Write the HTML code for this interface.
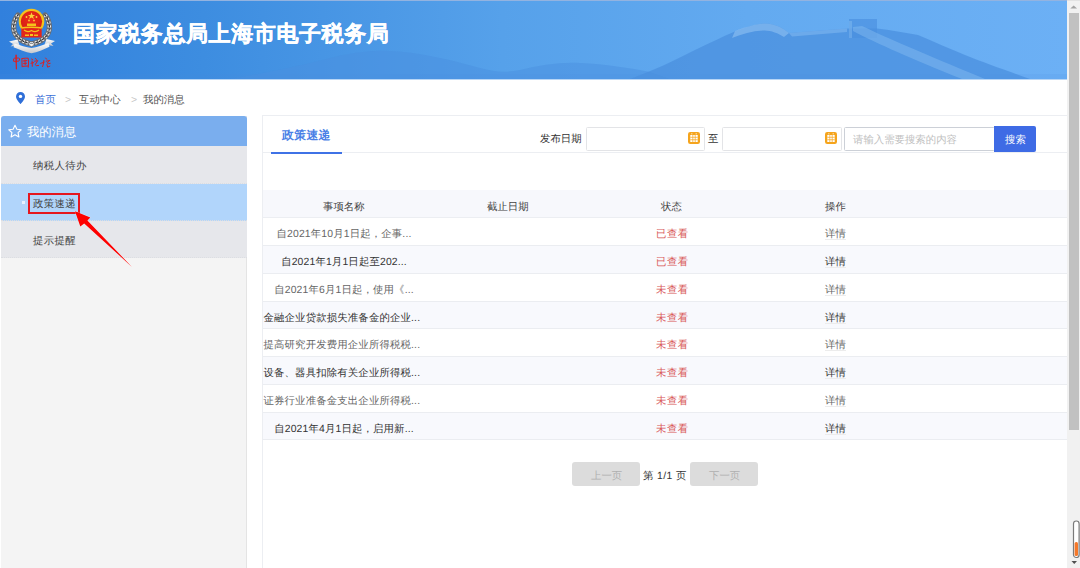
<!DOCTYPE html>
<html><head><meta charset="utf-8">
<style>
*{margin:0;padding:0;box-sizing:border-box}
html,body{width:1080px;height:568px;overflow:hidden;background:#fff;font-family:"Liberation Sans",sans-serif;color:#333;text-rendering:geometricPrecision}
.a{position:absolute}
.t{position:absolute;white-space:nowrap;line-height:1}
.s{margin-top:2.5px}
#title{left:73px;top:23px;font-size:22px;font-weight:bold;color:#fff;letter-spacing:0.6px;-webkit-text-stroke:0.35px #fff}
.crumb{font-size:10.4px;color:#555;top:93px}
#side{left:1px;top:116px;width:246px;height:452px;background:#f4f4f4;border-right:1px solid #e4e4e4}
#sh{left:1px;top:116px;width:246px;height:30px;background:#7aaeee;border-radius:3px 3px 0 0}
.mi{left:1px;width:246px;height:37px;background:#e6e7eb;border-bottom:1px dotted #dcdee2}
.mt{font-size:10.4px;color:#444;left:33px;letter-spacing:0.35px}
#panel{left:262px;top:115px;width:806px;height:453px;border-left:1px solid #eceef2;border-top:1px solid #eceef2;background:#fff}
.inp{height:24px;border:1px solid #e3e4e7;border-radius:1.5px;background:#fff}
.cal{width:12px;height:12px;background:#f5a31a;border-radius:2px}
.row{left:263px;width:805px;height:28px;border-bottom:1px solid #eceef2}
.c{font-size:10.4px;color:#666}
.red{color:#d85858;letter-spacing:0.5px}
.pbtn{height:24px;width:68px;background:#dcdcdc;border-radius:3px}
</style></head><body>
<svg id="hdr" class="a" style="left:0;top:0" width="1068" height="80" viewBox="0 0 1068 80">
<defs>
<linearGradient id="hg" x1="0" y1="0" x2="1068" y2="0" gradientUnits="userSpaceOnUse">
<stop offset="0" stop-color="#3180dd"/><stop offset="0.19" stop-color="#3d8de0"/><stop offset="0.47" stop-color="#56a1ea"/><stop offset="0.7" stop-color="#63aaf0"/><stop offset="1" stop-color="#6cb0f5"/>
</linearGradient>
</defs>
<rect width="1068" height="79" fill="url(#hg)"/>
<path d="M230 79 C260 74 300 66 330 58 C350 53 370 50 390 51 C420 52 450 60 480 68 C495 72 505 73 520 70 C540 65 560 62 580 63 C605 64 630 68 650 72 L670 79 Z" fill="#4a8fdf" opacity="0.5"/>
<rect x="0" y="74" width="1068" height="5" fill="#4a8fdf" opacity="0.12"/>
<path d="M630 79 C655 70 675 60 695 50 C712 42 728 34 740 29.5 C750 26 757 24 765 23.5 C776 24 783 28 789 33 L847 28.5 L849 28.5 L877 28.5 C890 30 905 33 918 35 C935 42 950 49 965 55 C985 63 1005 70 1030 79 Z" fill="#4a8fde" opacity="0.72"/>
<path d="M735 31 C748 26 757 24 765 23.5 C776 24 783 28 789 33 L784 37 C778 33 770 30 763 30.5 C752 31 742 34 732 38 Z" fill="#9ccaf5" opacity="0.5"/>
<path d="M789 33 L847 28.5 L847 32 L792 36.5 Z" fill="#8fc2f3" opacity="0.45"/>
<rect x="849" y="19" width="28" height="19" fill="#4a8fde" opacity="0.65"/>
<rect x="849" y="21" width="3" height="17" fill="#8fc2f3" opacity="0.4"/>
<path d="M853 27 L862 26 C885 37 920 52 985 79 L962 79 C910 58 878 44 853 31 Z" fill="#8fc2f3" opacity="0.4"/>
<rect width="1068" height="1" fill="#93b3e0"/>
<rect y="79" width="1068" height="1" fill="#b8d6f6"/>
</svg>
<svg class="a" style="left:0;top:0" width="70" height="79" viewBox="0 0 70 79">
<defs>
<radialGradient id="rg" cx="0.5" cy="0.4" r="0.6"><stop offset="0" stop-color="#f02a1a"/><stop offset="1" stop-color="#d41f14"/></radialGradient>
<linearGradient id="sg" x1="0" y1="0" x2="0" y2="1"><stop offset="0" stop-color="#ffffff"/><stop offset="1" stop-color="#c4c7cc"/></linearGradient>
</defs>
<g fill="none" stroke-linecap="round">
<path d="M18 15 C13 21 12.5 29 15.5 34.5 C18.5 39 24 42.5 31.5 44" stroke="#6a6d72" stroke-width="5.2"/>
<path d="M45 15 C50 21 50.5 29 47.5 34.5 C44.5 39 39 42.5 31.5 44" stroke="#6a6d72" stroke-width="5.2"/>
<path d="M18 15 C13 21 12.5 29 15.5 34.5 C18.5 39 24 42.5 31.5 44" stroke="#eceded" stroke-width="3.4" stroke-dasharray="2 1.8" stroke-linecap="butt"/>
<path d="M45 15 C50 21 50.5 29 47.5 34.5 C44.5 39 39 42.5 31.5 44" stroke="#eceded" stroke-width="3.4" stroke-dasharray="2 1.8" stroke-linecap="butt"/>
<path d="M18 15 C13 21 12.5 29 15.5 34.5 C18.5 39 24 42.5 31.5 44" stroke="#1e1f22" stroke-width="1.1" stroke-dasharray="1.2 2.6"/>
<path d="M45 15 C50 21 50.5 29 47.5 34.5 C44.5 39 39 42.5 31.5 44" stroke="#1e1f22" stroke-width="1.1" stroke-dasharray="1.2 2.6"/>
</g>
<circle cx="31.5" cy="21.5" r="12.8" fill="#f5c21b"/>
<circle cx="31.5" cy="21.5" r="10.6" fill="url(#rg)"/>
<path d="M31.5 12.3 l1 2.6 2.7 0 -2.2 1.6 .9 2.6 -2.4 -1.6 -2.4 1.6 .9 -2.6 -2.2 -1.6 2.7 0z" fill="#f7d23a"/>
<circle cx="26.5" cy="17" r="0.9" fill="#f7d23a"/><circle cx="36.5" cy="17" r="0.9" fill="#f7d23a"/>
<circle cx="29" cy="20.5" r="0.9" fill="#f7d23a"/><circle cx="34" cy="20.5" r="0.9" fill="#f7d23a"/>
<rect x="27" y="23.5" width="9" height="2.5" fill="#f5c21b"/>
<path d="M21.3 28 C25 26.5 38 26.5 41.7 28 L41.7 37.4 L21.3 37.4 Z" fill="#e2261a"/>
<path d="M21.5 28.2 C25 27 38 27 41.5 28.2" fill="none" stroke="#f5c21b" stroke-width="1.4"/>
<path d="M24 30 Q27.5 33 31.5 30.5 Q35.5 33 39 30" fill="none" stroke="#f5c21b" stroke-width="1.2"/>
<path d="M25 34.5 h4 v1.5 h-4z M30 34 h3 v2 h-3z M34 34.5 h4 v1.5 h-4z" fill="#f5c21b"/>
<path d="M9 41.5 L17.5 39.5 L19.5 45 L10.5 46.5 L13 44 Z" fill="url(#sg)"/>
<path d="M55 41 L46.5 39 L44.5 44.5 L53.5 46 L51 43.5 Z" fill="url(#sg)"/>
<path d="M14.5 43.5 C20 45 26 47.5 31.5 48 C37 47.5 43 45 48.5 43 L49.5 46.8 C43.5 49.5 37.5 52.5 31.5 53.3 C25.5 52.5 19.5 49.5 13.5 47.3 Z" fill="url(#sg)"/>
<path d="M28 42.5 L31.5 46.5 L35 42.5 L31.5 44 Z" fill="#f2f2f2"/>
</svg>
<svg class="a" style="left:0;top:50px" width="60" height="25" viewBox="0 50 60 25"><g fill="none" stroke="#dc1f22" stroke-width="1.0" stroke-linecap="round" stroke-linejoin="round">
<path d="M13.4 60.5 Q13 58.3 14.6 58.2 L18.8 58 Q20 58.4 19.4 60.2 Q19 61.4 17.6 61.3 L14 61.3 Z"/>
<path d="M16.1 55.2 L16.2 62" stroke-width="1.5"/>
<path d="M16.2 62 L16.4 68.8" stroke-width="1.2"/>
<path d="M21.9 58.6 L22.1 66.8 M22.2 58.5 Q25.5 58 28.2 58.2 Q28.9 61 28.3 67.2 M23.3 61 L26.8 60.6 M23.6 63.6 L26.6 63.2 M25 59.8 L25.2 64.8 M22.6 66.4 L27.6 66"/>
<path d="M31.6 59 L32.6 59.6 M32.1 61 L32.3 66.3 M31 63.3 L33.6 62.6 M35.4 58.4 L36.4 59.5 M34.6 61.2 L37.8 60.6 L35.2 64.6 Q35.6 66.2 38.6 65.6"/>
<path d="M40.6 63.4 L44.2 62.2 M43.8 60.5 Q43.6 64.5 42.6 66.6 M45.6 58 L46.6 59.2 M46.2 61.2 L49.8 60.4 L47.2 63 Q48.2 64.2 50.2 63.4 M47 64.6 L47.6 67.2 L49.8 66.2"/>
</g></svg>
<div id="title" class="t">国家税务总局上海市电子税务局</div>

<!-- breadcrumb -->
<svg class="a" style="left:16px;top:92px" width="9" height="12" viewBox="0 0 9 12"><path d="M4.5 0C2 0 0 2 0 4.4 0 7.5 4.5 12 4.5 12S9 7.5 9 4.4C9 2 7 0 4.5 0z" fill="#2f6fd8"/><circle cx="4.5" cy="4.4" r="1.7" fill="#fff"/></svg>
<div class="t s crumb" style="left:35px;color:#3a6fd8">首页</div>
<div class="t s crumb" style="left:65px;color:#c4c4c4">&gt;</div>
<div class="t s crumb" style="left:79px">互动中心</div>
<div class="t s crumb" style="left:131px;color:#c4c4c4">&gt;</div>
<div class="t s crumb" style="left:143px">我的消息</div>

<!-- sidebar -->
<div id="side" class="a"></div>
<div id="sh" class="a"></div>
<svg class="a" style="left:7.5px;top:123.5px" width="14" height="14" viewBox="0 0 14 14" overflow="visible"><path d="M7 1.3l1.9 3.9 4.3.55-3.15 2.95.85 4.25L7 10.85l-3.9 2.1.85-4.25L.8 5.75l4.3-.55z" fill="none" stroke="#fff" stroke-width="1.1" stroke-linejoin="round"/></svg>
<div class="t s" style="left:27px;top:123.5px;font-size:12.3px;color:#fff">我的消息</div>
<div class="a mi" style="top:146px;height:38px"></div>
<div class="t s mt" style="top:159px">纳税人待办</div>
<div class="a mi" style="top:184px;background:#b1d5fb"></div>
<div class="a" style="left:22px;top:201px;width:3px;height:3px;background:#e8f2fe"></div>
<div class="t s mt" style="top:197px">政策速递</div>
<div class="a mi" style="top:221px"></div>
<div class="t s mt" style="top:234px">提示提醒</div>
<div class="a" style="left:28px;top:193px;width:52px;height:21px;border:2px solid #e5171f"></div>
<svg class="a" style="left:0;top:0" width="200" height="300"><path d="M75 211.3 L90.3 217.4 L87.4 220.6 L132.2 267.2 L84.2 223.4 L80.3 226.4 Z" fill="#fe0000" stroke="#fff" stroke-width="0.6" stroke-opacity="0.6" paint-order="stroke"/></svg>

<!-- panel -->
<div id="panel" class="a"></div>
<div class="t s" style="left:282px;top:127px;font-size:11.8px;color:#4a7fe6;font-weight:bold;letter-spacing:0.4px">政策速递</div>
<div class="a" style="left:263px;top:152px;width:805px;height:1px;background:#eceef2"></div>
<div class="a" style="left:271px;top:152px;width:71px;height:2px;background:#3f72e6"></div>
<div class="t s" style="left:540px;top:132px;font-size:10.4px;color:#333">发布日期</div>
<div class="a inp" style="left:586px;top:127px;width:119px"></div>
<svg class="a" style="left:688px;top:132px" width="12" height="12" viewBox="0 0 12 12"><rect width="12" height="12" rx="2.2" fill="#f5a41c"/><rect x="2.3" y="3" width="7.4" height="7" fill="#fff"/><path d="M4.8 3v7M7.2 3v7M2.3 5.3h7.4M2.3 7.7h7.4" stroke="#f5a41c" stroke-width="0.7"/><rect x="3.2" y="1.3" width="1.2" height="1" fill="#fff" opacity="0.8"/><rect x="7.6" y="1.3" width="1.2" height="1" fill="#fff" opacity="0.8"/></svg>
<div class="t s" style="left:708px;top:132px;font-size:10.4px;color:#333">至</div>
<div class="a inp" style="left:722px;top:127px;width:120px"></div>
<svg class="a" style="left:825px;top:132px" width="12" height="12" viewBox="0 0 12 12"><rect width="12" height="12" rx="2.2" fill="#f5a41c"/><rect x="2.3" y="3" width="7.4" height="7" fill="#fff"/><path d="M4.8 3v7M7.2 3v7M2.3 5.3h7.4M2.3 7.7h7.4" stroke="#f5a41c" stroke-width="0.7"/><rect x="3.2" y="1.3" width="1.2" height="1" fill="#fff" opacity="0.8"/><rect x="7.6" y="1.3" width="1.2" height="1" fill="#fff" opacity="0.8"/></svg>
<div class="a inp" style="left:844px;top:127px;width:151px;border-color:#ccd0d7"></div>
<div class="t s" style="left:853px;top:133px;font-size:10.4px;color:#c0c0c0">请输入需要搜索的内容</div>
<div class="a" style="left:994px;top:126px;width:42px;height:26px;background:#3e6be5;border-radius:0 2px 2px 0"></div>
<div class="t s" style="left:1005px;top:133px;font-size:10.4px;color:#fff">搜索</div>

<!-- table -->
<div class="a row" style="top:190px;background:#f7f8fc"></div>
<div class="t s c" style="left:323px;top:200px;color:#444">事项名称</div>
<div class="t s c" style="left:487px;top:200px;color:#444">截止日期</div>
<div class="t s c" style="left:661px;top:200px;color:#444">状态</div>
<div class="t s c" style="left:825px;top:200px;color:#444">操作</div>
<div class="a" style="left:263px;top:218px;width:805px;height:28px;background:#fff;border-bottom:1px solid #ebedf1"></div>
<div class="t s c" style="left:244px;width:200px;text-align:center;letter-spacing:0.15px;top:227px;color:#666">自2021年10月1日起，企事...</div>
<div class="t s c red" style="left:656px;top:227px">已查看</div>
<div class="t s c" style="left:825px;top:227px;color:#666">详情</div>
<div class="a" style="left:825px;top:239px;width:21px;height:1px;background:#ececec"></div>
<div class="a" style="left:263px;top:246px;width:805px;height:28px;background:#f8f9fd;border-bottom:1px solid #ebedf1"></div>
<div class="t s c" style="left:244px;width:200px;text-align:center;letter-spacing:0.15px;top:255px;color:#333">自2021年1月1日起至202...</div>
<div class="t s c red" style="left:656px;top:255px">已查看</div>
<div class="t s c" style="left:825px;top:255px;color:#333">详情</div>
<div class="a" style="left:825px;top:267px;width:21px;height:1px;background:#ececec"></div>
<div class="a" style="left:263px;top:274px;width:805px;height:28px;background:#fff;border-bottom:1px solid #ebedf1"></div>
<div class="t s c" style="left:244px;width:200px;text-align:center;letter-spacing:0.15px;top:283px;color:#666">自2021年6月1日起，使用《...</div>
<div class="t s c red" style="left:656px;top:283px">未查看</div>
<div class="t s c" style="left:825px;top:283px;color:#666">详情</div>
<div class="a" style="left:825px;top:295px;width:21px;height:1px;background:#ececec"></div>
<div class="a" style="left:263px;top:302px;width:805px;height:27px;background:#f8f9fd;border-bottom:1px solid #ebedf1"></div>
<div class="t s c" style="left:263.5px;letter-spacing:0.15px;top:311px;color:#333">金融企业贷款损失准备金的企业...</div>
<div class="t s c red" style="left:656px;top:311px">未查看</div>
<div class="t s c" style="left:825px;top:311px;color:#333">详情</div>
<div class="a" style="left:825px;top:323px;width:21px;height:1px;background:#ececec"></div>
<div class="a" style="left:263px;top:329px;width:805px;height:28px;background:#fff;border-bottom:1px solid #ebedf1"></div>
<div class="t s c" style="left:263.5px;letter-spacing:0.15px;top:338px;color:#666">提高研究开发费用企业所得税税...</div>
<div class="t s c red" style="left:656px;top:338px">未查看</div>
<div class="t s c" style="left:825px;top:338px;color:#666">详情</div>
<div class="a" style="left:825px;top:350px;width:21px;height:1px;background:#ececec"></div>
<div class="a" style="left:263px;top:357px;width:805px;height:28px;background:#f8f9fd;border-bottom:1px solid #ebedf1"></div>
<div class="t s c" style="left:263.5px;letter-spacing:0.15px;top:366px;color:#333">设备、器具扣除有关企业所得税...</div>
<div class="t s c red" style="left:656px;top:366px">未查看</div>
<div class="t s c" style="left:825px;top:366px;color:#333">详情</div>
<div class="a" style="left:825px;top:378px;width:21px;height:1px;background:#ececec"></div>
<div class="a" style="left:263px;top:385px;width:805px;height:28px;background:#fff;border-bottom:1px solid #ebedf1"></div>
<div class="t s c" style="left:263.5px;letter-spacing:0.15px;top:394px;color:#666">证券行业准备金支出企业所得税...</div>
<div class="t s c red" style="left:656px;top:394px">未查看</div>
<div class="t s c" style="left:825px;top:394px;color:#666">详情</div>
<div class="a" style="left:825px;top:406px;width:21px;height:1px;background:#ececec"></div>
<div class="a" style="left:263px;top:413px;width:805px;height:27px;background:#f8f9fd;border-bottom:1px solid #ebedf1"></div>
<div class="t s c" style="left:244px;width:200px;text-align:center;letter-spacing:0.15px;top:422px;color:#333">自2021年4月1日起，启用新...</div>
<div class="t s c red" style="left:656px;top:422px">未查看</div>
<div class="t s c" style="left:825px;top:422px;color:#333">详情</div>
<div class="a" style="left:825px;top:434px;width:21px;height:1px;background:#ececec"></div>

<!-- pagination -->
<div class="a pbtn" style="left:572px;top:462px"></div>
<div class="t s" style="left:591px;top:469px;font-size:10.4px;color:#b0b0b0">上一页</div>
<div class="t s" style="left:643px;top:469px;font-size:10.4px;color:#333;letter-spacing:0.4px">第 1/1 页</div>
<div class="a pbtn" style="left:690px;top:462px"></div>
<div class="t s" style="left:709px;top:469px;font-size:10.4px;color:#b0b0b0">下一页</div>

<!-- scrollbar -->
<div class="a" style="left:1067px;top:0;width:13px;height:568px;background:#f1f1f1"></div>
<div class="a" style="left:1067px;top:0;width:13px;height:1px;background:#e2e2e2"></div>
<svg class="a" style="left:1067px;top:0" width="13" height="568" viewBox="0 0 13 568">
<path d="M3.3 8.6 L6.7 5.4 L10.1 8.6 Z" fill="#a3a3a3"/>
<rect x="2" y="13" width="10" height="417" fill="#c1c1c1"/>
<rect x="6.5" y="521" width="5.6" height="36.5" rx="2.8" fill="#fff" stroke="#7a7a7a" stroke-width="1.2"/>
<rect x="7.6" y="542" width="3.4" height="14" rx="1.5" fill="#f5782a"/>
<path d="M4.5 561 L10 561 L7.25 564 Z" fill="#505050"/>
</svg>
</body></html>
